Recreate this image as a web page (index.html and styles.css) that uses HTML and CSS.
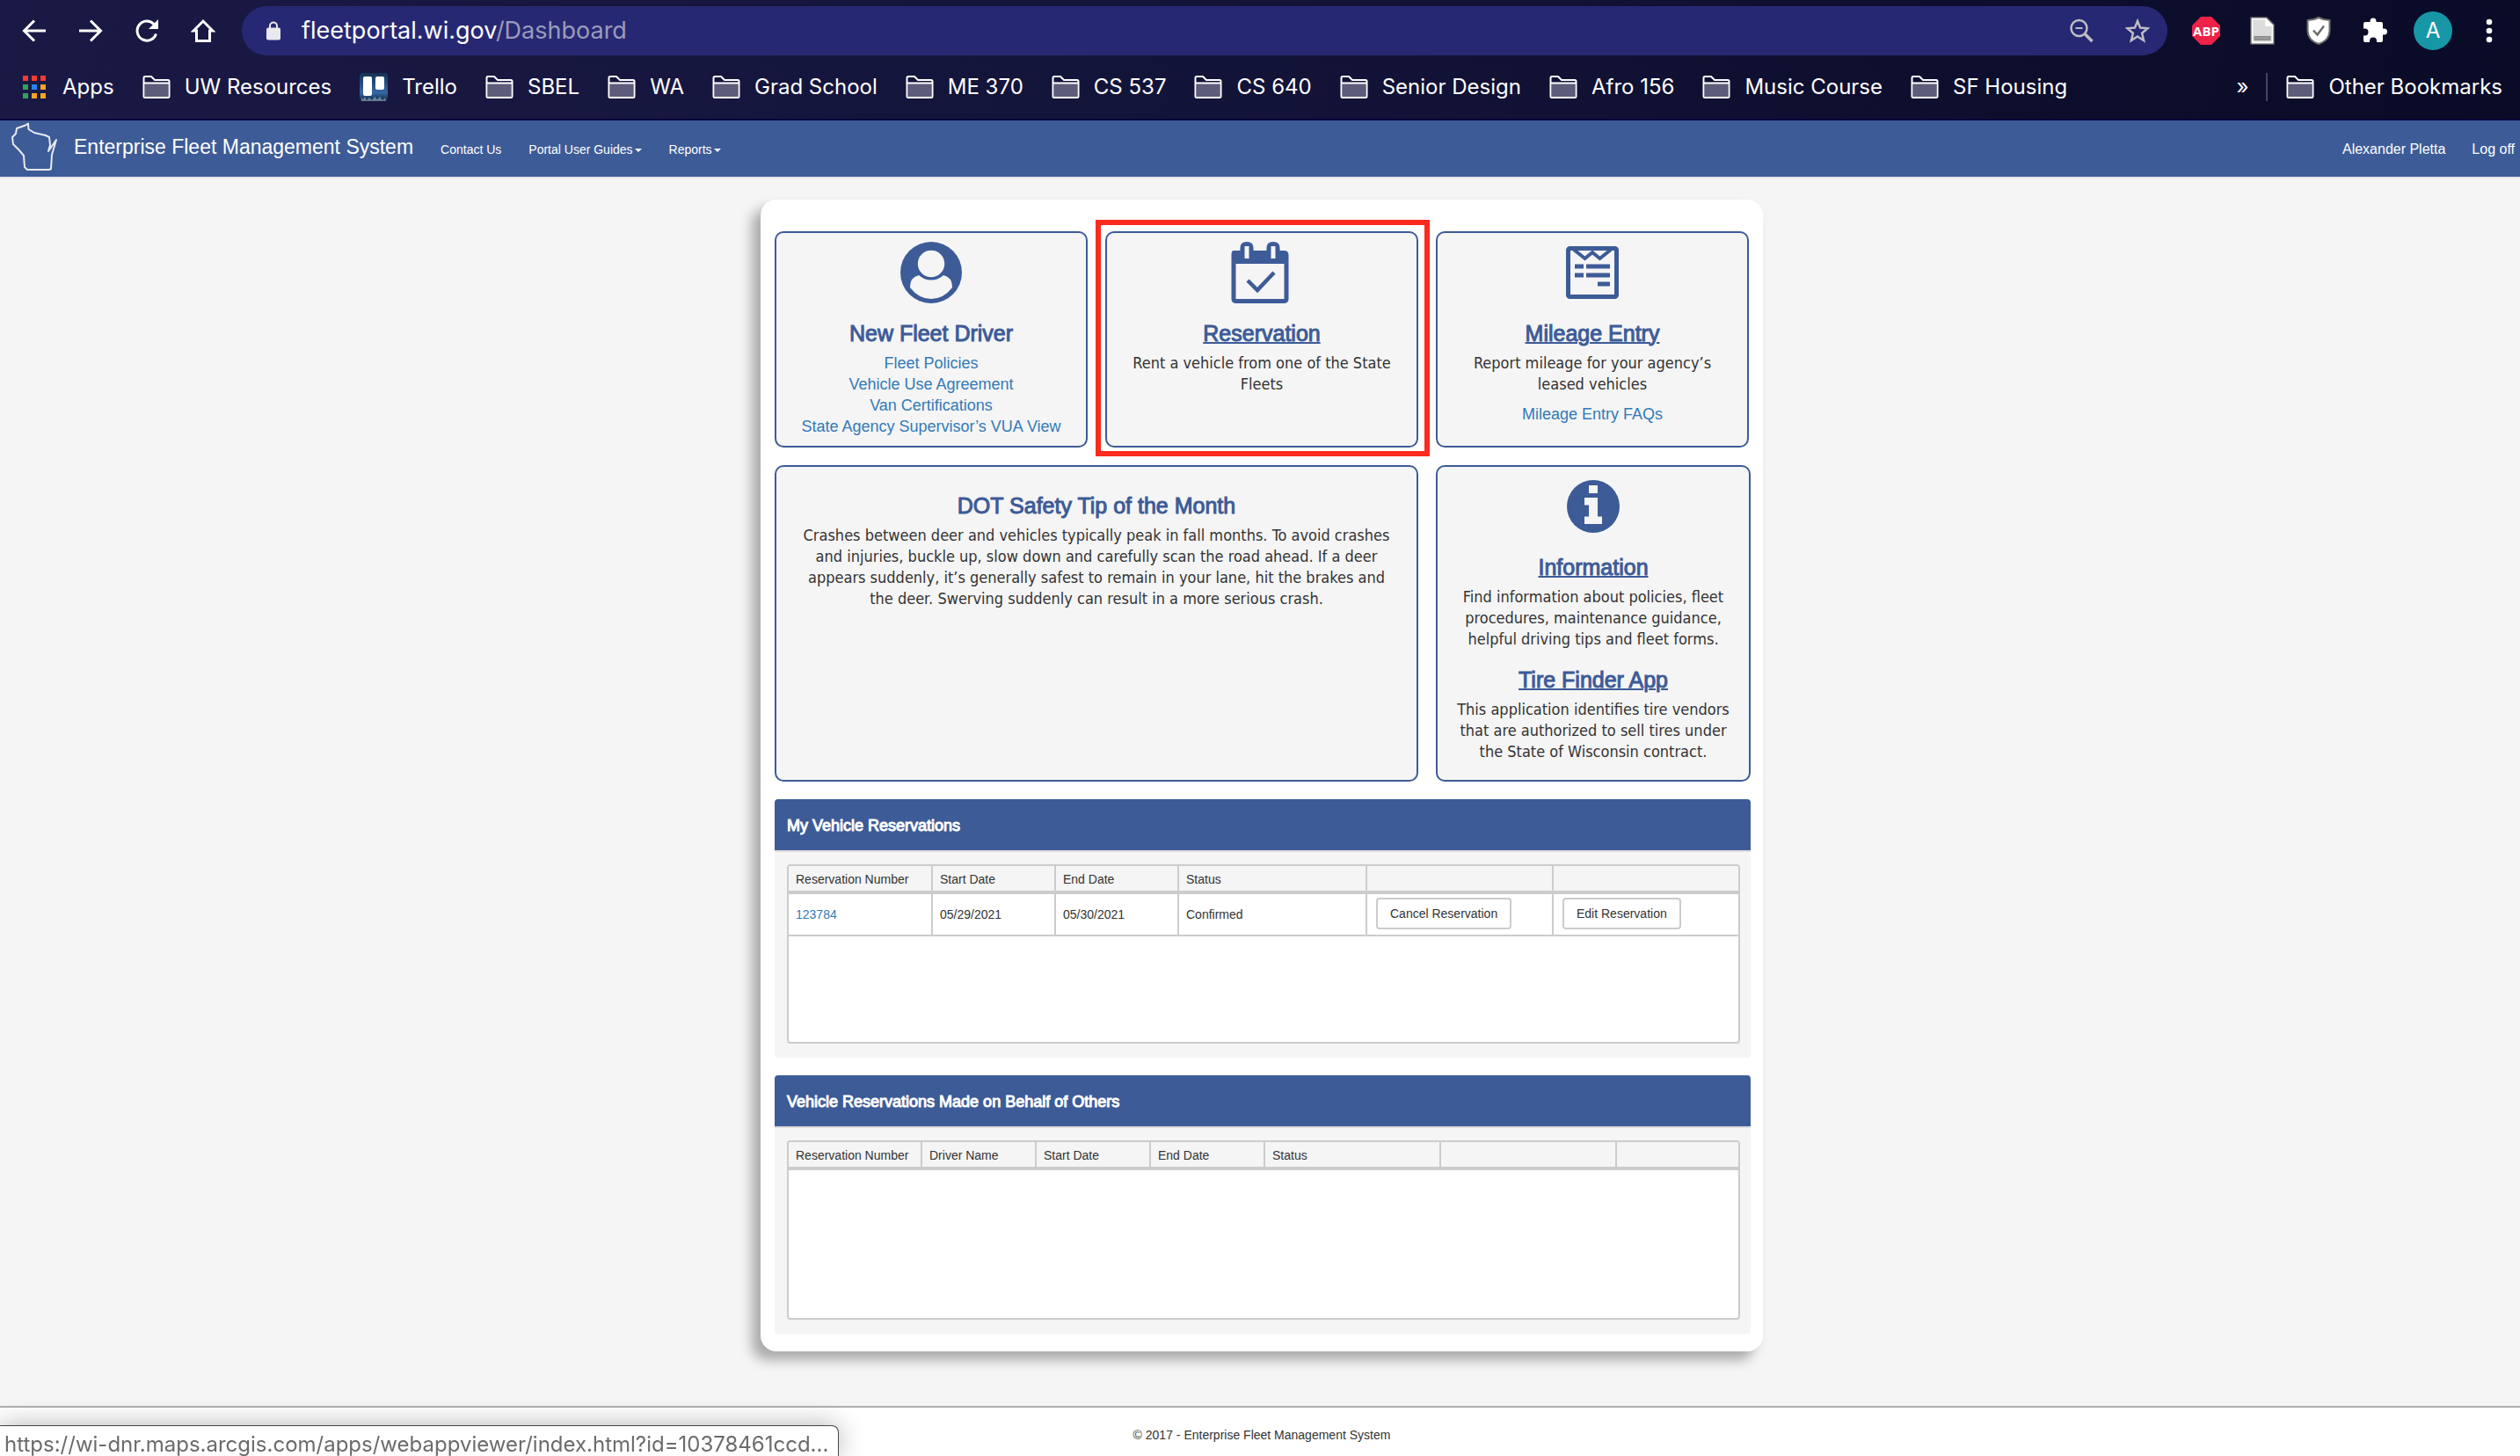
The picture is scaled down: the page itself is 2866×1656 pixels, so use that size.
FILE: index.html
```html
<!DOCTYPE html>
<html lang="en">
<head>
<meta charset="utf-8">
<title>Dashboard - Enterprise Fleet Management System</title>
<link rel="stylesheet" href="styles.css">
</head>
<body>
<svg class="defs" aria-hidden="true">
  <symbol id="folder" viewBox="0 0 32 28">
    <path d="M1.500 25V3.500Q1.500 2 3 2H10L14 6H29Q30.500 6 30.500 7.500V25Q30.500 26 29 26H3Q1.500 26 1.500 25Z" fill="none" stroke="#fff" stroke-width="2"/>
    <path d="M3 10H29V25H3Z" fill="#5d5c7a"/>
    <path d="M2 9.500H30" stroke="#fff" stroke-width="2"/>
  </symbol>
</svg>

<div class="browser">
  <div class="toolbar">
    <button class="tool" aria-label="Back"><svg viewBox="0 0 28 28"><path d="M27 14H3M14 2.500L2.500 14L14 25.500" fill="none" stroke="#fff" stroke-width="3"/></svg></button>
    <button class="tool" aria-label="Forward"><svg viewBox="0 0 28 28"><path d="M1 14H25M14 2.500L25.500 14L14 25.500" fill="none" stroke="#fff" stroke-width="3"/></svg></button>
    <button class="tool" aria-label="Reload"><svg viewBox="0 0 28 28"><path d="M24.500 17.500A11 11 0 1 1 22 6.500" fill="none" stroke="#fff" stroke-width="3"/><path d="M27 1V12H16Z" fill="#fff"/></svg></button>
    <button class="tool" aria-label="Home"><svg viewBox="0 0 28 28"><path d="M6.500 14V25.500H21.500V14H25L14 3L3 14Z" fill="none" stroke="#fff" stroke-width="3"/></svg></button>
    <div class="address">
      <svg class="lock" viewBox="0 0 18 24"><path d="M5 10V6.500A4 4 0 0 1 13 6.500V10" fill="none" stroke="#e8e8ee" stroke-width="2"/><rect x="1" y="8.500" width="16" height="14" rx="2" fill="#e8e8ee"/></svg>
      <span class="url">fleetportal.wi.gov<span class="path">/Dashboard</span></span>
      <button class="tool" aria-label="Zoom"><svg viewBox="0 0 28 28"><circle cx="11.500" cy="11" r="9" fill="none" stroke="#bdbdc4" stroke-width="2.500"/><path d="M7.500 11H15.500" stroke="#bdbdc4" stroke-width="2"/><path d="M18 17.500L26.500 26" stroke="#bdbdc4" stroke-width="3.500"/></svg></button>
      <button class="tool" aria-label="Bookmark this page"><svg viewBox="0 0 28 28"><path d="M14 3L17.100 10.600L25.500 11.300L19.100 16.700L21.100 25L14 20.500L6.900 25L8.900 16.700L2.500 11.300L10.900 10.600Z" fill="none" stroke="#bdbdc4" stroke-width="2.500"/></svg></button>
    </div>
    <div class="extensions">
      <button class="ext" aria-label="Adblock Plus"><svg viewBox="0 0 32 32"><path d="M10 0H22L32 10V22L22 32H10L0 22V10Z" fill="#ee2247"/><text x="16" y="22" text-anchor="middle" class="abp">ABP</text></svg></button>
      <button class="ext" aria-label="Reader"><svg viewBox="0 0 32 32"><path d="M3 1H21L29 9V31H3Z" fill="#dcdcdc" stroke="#666" stroke-width="1.500"/><path d="M4.500 2.500H20V10H27.500V29.500H4.500Z" fill="none" stroke="#fff" stroke-width="1.500"/><path d="M20 2V10H28Z" fill="#fff"/><rect x="7" y="22.500" width="18" height="4" fill="#999" stroke="#888"/></svg></button>
      <button class="ext" aria-label="Shield"><svg viewBox="0 0 32 32"><path d="M16 1Q22 4 28.500 4V16Q28 27 16 31Q4 27 3.500 16V4Q10 4 16 1Z" fill="#fff" stroke="#6c6c6c" stroke-width="2"/><path d="M10 15.500L14.500 20.500L22 10.500" fill="none" stroke="#6c6c6c" stroke-width="2.500"/></svg></button>
      <button class="ext" aria-label="Extensions"><svg viewBox="0 0 32 32"><path d="M3 8Q3 6 5 6H10.500V5A3.500 3.500 0 0 1 17.500 5V6H23Q25 6 25 8V13.500H26.500A3.500 3.500 0 0 1 26.500 20.500H25V27Q25 29 23 29H18V27.500A4 4 0 0 0 10 27.500V29H5Q3 29 3 27V21.500H4.500A4 4 0 0 0 4.500 13.500H3Z" fill="#fff"/></svg></button>
      <button class="avatar" aria-label="Profile">A</button>
      <button class="tool" aria-label="Menu"><svg viewBox="0 0 28 28"><g fill="#fff"><circle cx="14" cy="4" r="3.300"/><circle cx="14" cy="14" r="3.300"/><circle cx="14" cy="24" r="3.300"/></g></svg></button>
    </div>
  </div>
  <nav class="bookmarks" aria-label="Bookmarks">
    <a href="#" class="apps"><svg class="grid-icon" viewBox="0 0 28 28"><g fill="#f23b34"><path d="M1 1H7V7H1ZM11 1H17V7H11ZM21 1H27V7H21Z"/></g><path d="M1 11H7V17H1ZM1 21H7V27H1Z" fill="#34a058"/><path d="M11 11H17V17H11Z" fill="#2485f5"/><path d="M21 11H27V17H21ZM11 21H17V27H11ZM21 21H27V27H21Z" fill="#f6a623"/></svg>Apps</a>
    <a href="#"><svg><use href="#folder"/></svg>UW Resources</a>
    <a href="#"><svg class="trello" viewBox="0 0 32 32"><defs><linearGradient id="sky" x1="0" y1="0" x2="0" y2="1"><stop offset="0" stop-color="#173052"/><stop offset=".7" stop-color="#3568a5"/><stop offset="1" stop-color="#10263e"/></linearGradient></defs><rect width="32" height="32" rx="3" fill="url(#sky)"/><path d="M2 32V28L4 30L6 27L8 31L11 28L14 31L17 27L20 30L23 27L26 31L29 28L30 32Z" fill="#b9cfdf" opacity=".5"/><rect x="4" y="4" width="10" height="22" rx="2" fill="#fff"/><rect x="18" y="4" width="10" height="15" rx="2" fill="#fff"/></svg>Trello</a>
    <a href="#"><svg><use href="#folder"/></svg>SBEL</a>
    <a href="#"><svg><use href="#folder"/></svg>WA</a>
    <a href="#"><svg><use href="#folder"/></svg>Grad School</a>
    <a href="#"><svg><use href="#folder"/></svg>ME 370</a>
    <a href="#"><svg><use href="#folder"/></svg>CS 537</a>
    <a href="#"><svg><use href="#folder"/></svg>CS 640</a>
    <a href="#"><svg><use href="#folder"/></svg>Senior Design</a>
    <a href="#"><svg><use href="#folder"/></svg>Afro 156</a>
    <a href="#"><svg><use href="#folder"/></svg>Music Course</a>
    <a href="#"><svg><use href="#folder"/></svg>SF Housing</a>
    <button class="more" aria-label="More bookmarks">»</button>
    <a href="#" class="other"><svg><use href="#folder"/></svg>Other Bookmarks</a>
  </nav>
</div>

<header class="navbar">
  <svg class="state" viewBox="0 0 54 56"><path d="M7 7L17 3.500L20 1.500L20.500 8L27 12L40 15L44 17L45 26L43 33L52 20L47 37L46 53L44 54H19L16 51L15 38L10 32L3 25L2 17L6 13Z" fill="none" stroke="#e6eaf2" stroke-width="2" stroke-linejoin="round"/></svg>
  <a href="#" class="brand">Enterprise Fleet Management System</a>
  <a href="#">Contact Us</a>
  <a href="#" class="menu">Portal User Guides</a>
  <a href="#" class="menu">Reports</a>
  <div class="account">
    <a href="#">Alexander Pletta</a>
    <a href="#">Log off</a>
  </div>
</header>

<main>
  <div class="sheet">
    <div class="tiles top">
      <section class="tile">
        <svg class="icon" viewBox="0 0 70 70"><circle cx="35" cy="35" r="35" fill="#3d5b97"/><path d="M21 38Q11 40 11 52Q21 65 35 65Q49 65 59 52Q59 40 49 38Q43 43.500 35 43.500Q27 43.500 21 38Z" fill="#f5f5f5"/><circle cx="35" cy="25" r="15.200" fill="#f5f5f5"/></svg>
        <h2>New Fleet Driver</h2>
        <ul>
          <li><a href="#">Fleet Policies</a></li>
          <li><a href="#">Vehicle Use Agreement</a></li>
          <li><a href="#">Van Certifications</a></li>
          <li><a href="#">State Agency Supervisor’s VUA View</a></li>
        </ul>
      </section>
      <section class="tile marked">
        <svg class="icon" viewBox="2 0 70 70"><path fill-rule="evenodd" d="M5 10H12.500V7Q12.500 0 20 0Q27.500 0 27.500 7V10H42.500V7Q42.500 0 50 0Q57.500 0 57.500 7V10H62Q67.500 10 67.500 15V65Q67.500 70 62 70H8Q2.500 70 2.500 65V15Q2.500 10 5 10ZM7.500 25V65H62.500V25ZM17.500 5V19H22.500V5ZM47.500 5V19H52.500V5Z" fill="#3d5b97"/><path d="M21 44L32 55L51 35" fill="none" stroke="#3d5b97" stroke-width="4.500"/></svg>
        <h2><a href="#">Reservation</a></h2>
        <p>Rent a vehicle from one of the State Fleets</p>
      </section>
      <section class="tile">
        <svg class="icon" viewBox="0 0 70 70"><rect x="7.500" y="7.500" width="55" height="55" rx="2" fill="none" stroke="#3d5b97" stroke-width="5"/><path d="M14 9L26.500 19L35 12L43.500 19L56 9" fill="none" stroke="#3d5b97" stroke-width="4"/><path d="M15 25.500H25V30.500H15ZM28 25.500H55V30.500H28ZM15 35.500H25V40.500H15ZM28 35.500H55V40.500H28ZM41 45.500H55V50.500H41Z" fill="#3d5b97"/></svg>
        <h2><a href="#">Mileage Entry</a></h2>
        <p>Report mileage for your agency’s leased vehicles</p>
        <p class="faq"><a href="#">Mileage Entry FAQs</a></p>
      </section>
    </div>
    <div class="tiles">
      <section class="tile tip">
        <h2>DOT Safety Tip of the Month</h2>
        <p>Crashes between deer and vehicles typically peak in fall months. To avoid crashes and injuries, buckle up, slow down and carefully scan the road ahead. If a deer appears suddenly, it’s generally safest to remain in your lane, hit the brakes and the deer. Swerving suddenly can result in a more serious crash.</p>
      </section>
      <section class="tile">
        <svg class="icon" viewBox="0 0 70 70"><circle cx="35" cy="35" r="30" fill="#3d5b97"/><path d="M30 11H40V20H30ZM25 25H40V46.500H45V55H25V46.500H30V33.500H25Z" fill="#f5f5f5"/></svg>
        <h2><a href="#">Information</a></h2>
        <p>Find information about policies, fleet procedures, maintenance guidance, helpful driving tips and fleet forms.</p>
        <h2><a href="#">Tire Finder App</a></h2>
        <p>This application identifies tire vendors that are authorized to sell tires under the State of Wisconsin contract.</p>
      </section>
    </div>

    <section class="panel">
      <h3>My Vehicle Reservations</h3>
      <div class="panel-body">
        <div class="grid">
          <table class="mine">
            <colgroup><col class="number"><col class="date"><col class="date"><col class="status"><col class="action"><col></colgroup>
            <thead><tr><th>Reservation Number</th><th>Start Date</th><th>End Date</th><th>Status</th><th></th><th></th></tr></thead>
            <tbody><tr><td><a href="#">123784</a></td><td>05/29/2021</td><td>05/30/2021</td><td>Confirmed</td><td><button>Cancel Reservation</button></td><td><button>Edit Reservation</button></td></tr></tbody>
          </table>
        </div>
      </div>
    </section>

    <section class="panel">
      <h3>Vehicle Reservations Made on Behalf of Others</h3>
      <div class="panel-body">
        <div class="grid">
          <table class="others">
            <colgroup><col class="number"><col class="date"><col class="date"><col class="date"><col class="status"><col class="status"><col></colgroup>
            <thead><tr><th>Reservation Number</th><th>Driver Name</th><th>Start Date</th><th>End Date</th><th>Status</th><th></th><th></th></tr></thead>
          </table>
        </div>
      </div>
    </section>
  </div>
</main>

<footer>© 2017 - Enterprise Fleet Management System</footer>
<div class="status-bubble">https://wi-dnr.maps.arcgis.com/apps/webappviewer/index.html?id=10378461ccd...</div>
</body>
</html>
```

FILE: styles.css
```css
* { box-sizing: border-box; }

body {
  margin: 0;
  min-height: 100vh;
  display: flex;
  flex-direction: column;
  background: #f5f5f5;
  color: #333;
  font: 14px/20px "Liberation Sans", Arial, sans-serif;
}

a { color: #337ab7; text-decoration: none; }
button { border: 0; padding: 0; background: none; font: inherit; color: inherit; }
svg { display: block; flex: none; }
.defs { position: absolute; width: 0; height: 0; }

/* Browser window */
.browser {
  background: linear-gradient(100deg, #1a1945 0%, #14153b 40%, #0a0b27 100%);
  border-bottom: 2px solid #08043c;
  color: #fff;
  font: 24px/32px Inter, "Liberation Sans", sans-serif;
}
.toolbar { display: flex; align-items: center; height: 70px; padding: 0 21px 0 25px; gap: 36px; }
.tool, .tool svg { width: 28px; height: 28px; }
.address {
  flex: 1;
  display: flex;
  align-items: center;
  height: 56px;
  margin-left: -6px;
  padding: 0 20px 0 27px;
  gap: 36px;
  border-radius: 28px;
  background: #272873;
}
.lock { width: 18px; height: 24px; margin-right: -13px; }
.url { flex: 1; font-size: 27px; }
.path { color: #9a9bbd; }
.extensions { display: flex; align-items: center; gap: 32px; margin-left: -8px; }
.ext, .ext svg { width: 32px; height: 32px; }
.abp { font: bold 15px "Open Sans", sans-serif; fill: #fff; }
.avatar { width: 44px; height: 44px; margin: 0 -4px; border-radius: 50%; background: #1797a6; }

.bookmarks { display: flex; align-items: center; height: 65px; padding: 0 20px 8px 25px; gap: 32px; white-space: nowrap; }
.bookmarks a { display: flex; align-items: center; gap: 16px; color: #fff; }
.bookmarks svg { width: 32px; height: 28px; }
.bookmarks .grid-icon { width: 28px; }
.bookmarks .apps { gap: 18px; }
.bookmarks .trello { height: 32px; }
.more { margin-left: auto; }
.more + .other { margin-left: -12px; padding-left: 21px; border-left: 2px solid #45465f; }

/* Site header */
.navbar {
  display: flex;
  align-items: baseline;
  height: 66px;
  padding: 0 6px 0 12px;
  gap: 31px;
  background: #3d5b97;
  border-bottom: 2px solid #e7e7e7;
}
.navbar a { color: #fff; }
.state { width: 54px; height: 56px; margin-right: -13px; align-self: flex-start; margin-top: 2px; }
.navbar .brand { font-size: 23px; line-height: 60px; }
.account { display: flex; gap: 30px; margin-left: auto; font-size: 16px; }
.menu::after {
  content: "";
  display: inline-block;
  margin-left: 2px;
  vertical-align: middle;
  border: 4px solid transparent;
  border-top-color: #fff;
  border-bottom: 0;
}

/* Dashboard sheet */
main { flex: 1; padding: 24px 0 62px 4px; }
.sheet {
  max-width: 1140px;
  margin: 0 auto;
  padding: 36px 14px 20px 16px;
  border-radius: 18px;
  background: #fff;
  box-shadow: -10px 10px 14px #aaa;
}
.tiles { display: grid; grid-template-columns: 356px 356px 1fr; gap: 20px; margin-bottom: 20px; }
.top { padding-right: 2px; }
.tile {
  position: relative;
  min-height: 246px;
  padding: 10px 22px;
  border: 2px solid #3d5b97;
  border-radius: 10px;
  background: #f5f5f5;
  text-align: center;
}
.tip { grid-column: span 2; min-height: 360px; padding: 10px 28px; }
.marked::after { content: ""; position: absolute; inset: -15px -15px -12px -13px; border: 6px solid #fc2a1f; }
.icon { width: 70px; height: 70px; margin: 0 auto; }
.tile h2 {
  margin: 20px 0 8px;
  color: #3d5b97;
  font-size: 25px;
  line-height: 28px;
  font-weight: 400;
  -webkit-text-stroke: 1px #3d5b97;
}
.tile h2 a { color: inherit; text-decoration: underline; text-decoration-thickness: 2px; }
.tile p { margin: 0; font: 18px/24px "DejaVu Sans Condensed", "Noto Sans", sans-serif; }
.tile ul { margin: 0 -20px; padding: 0; list-style: none; font-size: 18px; line-height: 24px; }
.tile .faq { margin-top: 10px; font-family: "Liberation Sans", Arial, sans-serif; }

/* Reservation panels */
.panel { border-radius: 4px; background: #f5f5f5; overflow: hidden; }
.panel + .panel { margin-top: 20px; }
.panel h3 {
  margin: 0;
  padding: 18px 14px 16px;
  border-bottom: 2px solid #ddd;
  background: #3d5b97;
  color: #fff;
  font-size: 18px;
  line-height: 24px;
  font-weight: 400;
  -webkit-text-stroke: 1px #fff;
}
.panel-body { padding: 14px 12px 16px 14px; }
.grid { min-height: 204px; border: 2px solid #ccc; border-radius: 4px; background: #fff; overflow: hidden; }
table { width: 100%; table-layout: fixed; border-collapse: separate; border-spacing: 0; }
th, td { padding: 0 8px; border-right: 2px solid #ccc; text-align: left; font-weight: 400; white-space: nowrap; }
th:last-child, td:last-child { border-right: 0; }
th { height: 32px; padding-top: 2px; border-bottom: 4px solid #ccc; background: #f5f5f5; }
td { height: 48px; border-bottom: 2px solid #ccc; }
td button { display: block; height: 36px; margin: -2px 2px 0; padding: 0 14px; border: 2px solid #ccc; border-radius: 4px; }
.mine .number { width: 164px; }
.mine .date { width: 140px; }
.mine .status { width: 214px; }
.mine .action { width: 212px; }
.others .number { width: 152px; }
.others .date { width: 130px; }
.others .status { width: 200px; }

footer { height: 57px; padding: 21px 0 0 4px; border-top: 2px solid #b0b0b0; background: #fff; text-align: center; }

.status-bubble {
  position: fixed;
  left: 0;
  bottom: 0;
  height: 35px;
  padding: 0 11px 0 5px;
  border: solid #444;
  border-width: 1px 1px 0 0;
  border-radius: 0 8px 0 0;
  background: #fff;
  color: #6b6b6b;
  box-shadow: 0 0 30px rgba(0, 0, 0, .3);
  font: 24px/42px Inter, "Liberation Sans", sans-serif;
}
```
